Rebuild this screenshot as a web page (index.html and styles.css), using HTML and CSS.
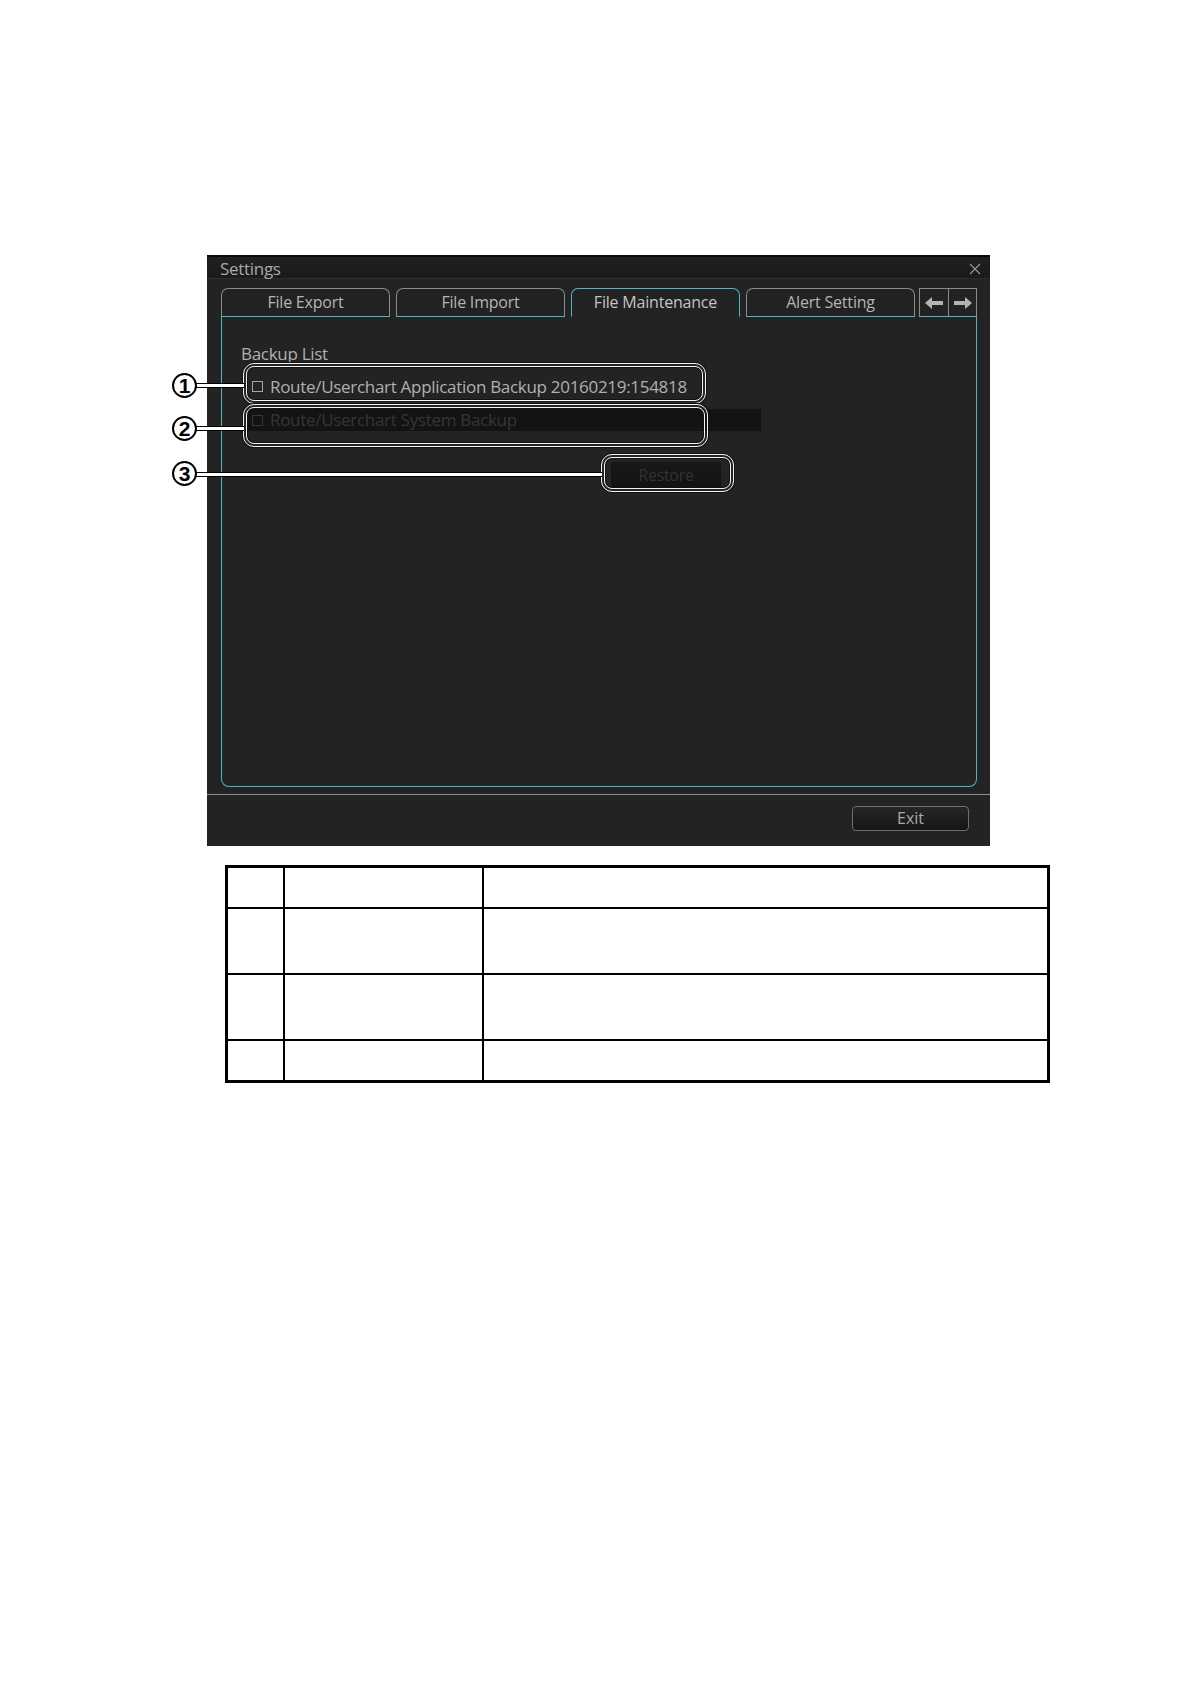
FILE: index.html
```html
<!DOCTYPE html>
<html lang="en">
<head>
<meta charset="utf-8">
<title>Settings - File Maintenance</title>
<link rel="stylesheet" href="styles.css">
</head>
<body>
<div class="sheet">
  <div class="dialog">
    <div class="titlebar">
      <span class="title">Settings</span>
      <svg class="close" width="12" height="12" viewBox="0 0 12 12"><path d="M1 1 L11 11 M11 1 L1 11" stroke="#9a9a9a" stroke-width="1.1" fill="none"/></svg>
    </div>
    <div class="tabs">
      <div class="tab">File Export</div>
      <div class="tab">File Import</div>
      <div class="tab active">File Maintenance</div>
      <div class="tab">Alert Setting</div>
      <div class="arrows">
        <div class="arrow"><svg width="18" height="12" viewBox="0 0 18 12"><path d="M0 6 L7 0 V4 H18 V8 H7 V12 Z" fill="#b4b4b4"/></svg></div>
        <div class="arrow"><svg width="18" height="12" viewBox="0 0 18 12"><path d="M18 6 L11 0 V4 H0 V8 H11 V12 Z" fill="#b4b4b4"/></svg></div>
      </div>
    </div>
    <div class="content">
      <div class="label">Backup List</div>
      <div class="row"><span class="check"></span><span>Route/Userchart Application Backup 20160219:154818</span></div>
      <div class="row dim"><span class="check"></span><span>Route/Userchart System Backup</span></div>
      <div class="restore-wrap"><div class="restore">Restore</div></div>
    </div>
    <div class="footer">
      <div class="exit">Exit</div>
    </div>
  </div>

  <table class="desc">
    <tr class="short"><td class="c1"></td><td class="c2"></td><td class="c3"></td></tr>
    <tr class="tall"><td></td><td></td><td></td></tr>
    <tr class="tall"><td></td><td></td><td></td></tr>
    <tr class="short"><td></td><td></td><td></td></tr>
  </table>

  <div class="callout box1"></div>
  <div class="callout box2"></div>
  <div class="callout box3"></div>
  <div class="leader l1"></div>
  <div class="leader l2"></div>
  <div class="leader l3"></div>
  <div class="num n1">1</div>
  <div class="num n2">2</div>
  <div class="num n3">3</div>
</div>
</body>
</html>
```

FILE: styles.css
```css
html, body {
  margin: 0;
  padding: 0;
  background: #ffffff;
}

.sheet {
  position: relative;
  width: 1190px;
  min-height: 1684px;
  padding: 255px 0 0 207px;
  box-sizing: border-box;
  font-family: "Open Sans", "Noto Sans", "DejaVu Sans", sans-serif;
}

.dialog {
  width: 783px;
  height: 591px;
  background: #232323;
  display: flex;
  flex-direction: column;
  box-sizing: border-box;
  border-top: 2px solid #0a0a0a;
}

.titlebar {
  height: 21px;
  background: linear-gradient(#202020, #1a1a1a);
  border-bottom: 1px solid #2c2c2c;
  display: flex;
  align-items: center;
  justify-content: space-between;
  padding: 0 9px 0 13px;
}

.title {
  color: #a8a8a8;
  font-size: 17px;
  letter-spacing: -0.3px;
  line-height: 21px;
  margin-top: 2px;
}

.close {
  display: block;
  margin-top: 2px;
}

.tabs {
  display: flex;
  align-items: flex-end;
  gap: 6px;
  margin: 9px 0 0 14px;
  height: 29px;
}

.tab {
  width: 169px;
  height: 29px;
  box-sizing: border-box;
  border: 1px solid #8c8c8c;
  border-bottom: 1px solid #4fb6bd;
  border-radius: 7px 7px 0 0;
  color: #b4b4b4;
  font-size: 16px;
  letter-spacing: -0.2px;
  text-align: center;
  line-height: 27px;
  background: #222222;
}

.tab.active {
  border-color: #4fb6bd;
  border-bottom-color: #232323;
  color: #c4c4c4;
}

.arrows {
  display: flex;
  margin-left: -2px;
}

.arrow {
  width: 29px;
  height: 29px;
  box-sizing: border-box;
  border-top: 1px solid #8c8c8c;
  border-left: 1px solid #8c8c8c;
  border-bottom: 1px solid #4fb6bd;
  display: flex;
  align-items: center;
  justify-content: center;
}

.arrow + .arrow {
  width: 29px;
  border-right: 1px solid #8c8c8c;
}

.content {
  margin: 0 13px 0 14px;
  height: 470px;
  box-sizing: border-box;
  border: 1px solid #4fb6bd;
  border-top: none;
  border-radius: 0 0 8px 8px;
  padding: 27px 0 0 19px;
  display: flex;
  flex-direction: column;
  color: #b0b0b0;
  font-size: 17px;
  letter-spacing: -0.3px;
}

.label {
  line-height: 20px;
  height: 20px;
}

.row {
  display: flex;
  align-items: center;
  gap: 7px;
  height: 22px;
  width: 503px;
  box-sizing: border-box;
  margin-left: -14px;
  padding-left: 25px;
}

.label + .row {
  margin-top: 11px;
}

.row.dim {
  margin-top: 12px;
  background: #131313;
  color: #363636;
  width: 514px;
  margin-left: 6px;
  padding-left: 5px;
  line-height: 20px;
}

.row.dim span:last-child {
  margin-top: -1px;
}

.check {
  width: 11px;
  height: 11px;
  box-sizing: border-box;
  border: 1px solid #a8a8a8;
  flex: none;
}

.row.dim .check {
  border-color: #353535;
}

.restore-wrap {
  margin-top: 31px;
  padding-left: 370px;
}

.restore {
  width: 110px;
  height: 27px;
  background: linear-gradient(#181818, #121212);
  color: #323232;
  text-align: center;
  line-height: 27px;
  font-size: 16px;
}

.footer {
  margin-top: 7px;
  border-top: 1px solid #8e8e8e;
  flex: 1;
  display: flex;
  justify-content: flex-end;
  align-items: flex-start;
  padding: 11px 21px 0 0;
}

.exit {
  width: 117px;
  height: 25px;
  box-sizing: border-box;
  border: 1px solid #6e6e6e;
  border-radius: 4px;
  background: linear-gradient(#262626, #161616);
  color: #a8a8a8;
  font-size: 16px;
  text-align: center;
  line-height: 23px;
}

.desc {
  margin: 19px 0 0 18px;
  border-collapse: collapse;
  width: 825px;
  border: 3px solid #000;
}

.desc td {
  border: 2px solid #000;
  padding: 0;
}

.desc tr.short td { height: 39px; }
.desc tr.tall td { height: 64px; }
.desc .c1 { width: 55px; }
.desc .c2 { width: 197px; }

/* annotation overlays */
.callout {
  position: absolute;
  box-sizing: border-box;
  border: 4px double #f2f2f2;
  border-radius: 11px;
  box-shadow: 0 0 0 1px #111, inset 0 0 0 1px #111;
}

.box1 { left: 243px; top: 363px; width: 463px; height: 41px; }
.box2 { left: 243px; top: 404px; width: 465px; height: 43px; }
.box3 { left: 601px; top: 454px; width: 133px; height: 38px; }

.leader {
  position: absolute;
  height: 3px;
  background: #ffffff;
  border-top: 1px solid #000;
  border-bottom: 1px solid #000;
}

.l1 { left: 195px; top: 383px; width: 49px; }
.l2 { left: 195px; top: 426px; width: 49px; }
.l3 { left: 195px; top: 472px; width: 407px; }

.num {
  position: absolute;
  width: 25px;
  height: 25px;
  box-sizing: border-box;
  border: 2px solid #000;
  border-radius: 50%;
  background: #fff;
  color: #000;
  font-family: "Liberation Sans", Arial, sans-serif;
  font-weight: bold;
  font-size: 21px;
  line-height: 21px;
  text-align: center;
}

.n1 { left: 172px; top: 373px; }
.n2 { left: 172px; top: 416px; }
.n3 { left: 172px; top: 461px; }
```
